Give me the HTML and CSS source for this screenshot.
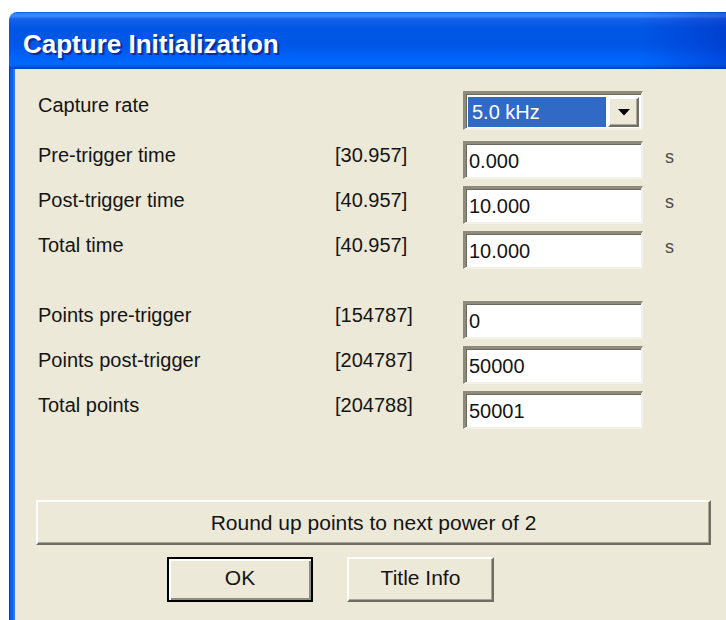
FILE: index.html
```html
<!DOCTYPE html>
<html lang="en">
<head>
<meta charset="utf-8">
<title>Capture Initialization</title>
<link rel="stylesheet" href="styles.css">
</head>
<body>
<div class="window">
  <div class="titlebar"><span class="title">Capture Initialization</span></div>
  <div class="panel">
    <div class="group">
      <div class="row row-combo">
        <span class="label">Capture rate</span>
        <span class="limit"></span>
        <div class="combo">
          <span class="combo-value">5.0 kHz</span>
          <span class="combo-btn"><svg width="12" height="7" viewBox="0 0 12 7"><polygon points="0,0 12,0 6,6.5" fill="#000"/></svg></span>
        </div>
      </div>
      <div class="row">
        <span class="label">Pre-trigger time</span>
        <span class="limit">[30.957]</span>
        <div class="field">0.000</div>
        <span class="unit">s</span>
      </div>
      <div class="row">
        <span class="label">Post-trigger time</span>
        <span class="limit">[40.957]</span>
        <div class="field">10.000</div>
        <span class="unit">s</span>
      </div>
      <div class="row">
        <span class="label">Total time</span>
        <span class="limit">[40.957]</span>
        <div class="field">10.000</div>
        <span class="unit">s</span>
      </div>
    </div>
    <div class="group">
      <div class="row">
        <span class="label">Points pre-trigger</span>
        <span class="limit">[154787]</span>
        <div class="field">0</div>
      </div>
      <div class="row">
        <span class="label">Points post-trigger</span>
        <span class="limit">[204787]</span>
        <div class="field">50000</div>
      </div>
      <div class="row">
        <span class="label">Total points</span>
        <span class="limit">[204788]</span>
        <div class="field">50001</div>
      </div>
    </div>
    <button class="btn btn-wide" type="button">Round up points to next power of 2</button>
    <div class="actions">
      <button class="btn btn-default" type="button">OK</button>
      <button class="btn btn-info" type="button">Title Info</button>
    </div>
  </div>
</div>
</body>
</html>
```
FILE: styles.css
```css
html, body {
  margin: 0;
  background: #fff;
  overflow: hidden;
}

body {
  font-family: "Liberation Sans", Arial, sans-serif;
}

/* Luna-style window frame */
.window {
  margin: 12px 0 0 9px;
  height: 608px;
  border-top-left-radius: 8px;
  overflow: hidden;
  display: flex;
  flex-direction: column;
}

.titlebar {
  flex: none;
  height: 57px;
  padding-left: 14px;
  background:
    linear-gradient(to right, rgba(0, 20, 160, 0) 88%, rgba(0, 25, 170, 0.35) 100%),
    linear-gradient(to bottom,
      #0048d6 0, #2a80fb 1px, #3d8cf9 4px, #1562ec 7px,
      #0056e4 16px, #0057e8 34px, #0062f8 44px, #0068ff 52px,
      #005ef2 54px, #0048d0 56px, #003fc0 57px);
}

.title {
  display: block;
  padding-top: 17px;
  font-weight: bold;
  font-size: 26px;
  line-height: 30px;
  color: #fff;
  text-shadow: 2px 2px 1px #0a2a9c;
}

.panel {
  flex: 1;
  padding: 22px 0 0 29px;
  background:
    linear-gradient(to right, #0a35d0 0 1px, #0d5ff0 1px 4px, #2b77f5 4px 6px, transparent 6px),
    #ece9d8;
}

/* form rows */
.group {
  display: flex;
  flex-direction: column;
  gap: 7px;
}

.group + .group {
  margin-top: 32px;
}

.row {
  display: grid;
  grid-template-columns: 297px 128px 180px auto;
  align-items: start;
  height: 38px;
  font-size: 20px;
  line-height: 24px;
  color: #141414;
}

.row-combo {
  height: 39px;
  margin-bottom: 4px;
}

.label,
.limit {
  padding-top: 2px;
  white-space: nowrap;
}

.unit {
  padding: 4px 0 0 22px;
  font-size: 18px;
  color: #4a4a4a;
}

/* sunken edit box */
.field {
  box-sizing: border-box;
  height: 38px;
  padding: 5px 3px 0;
  background: #fff;
  border-style: solid;
  border-width: 3px 2px 2px 3px;
  border-color: #8e8b7c #f4f2e8 #f4f2e8 #8e8b7c;
  box-shadow: inset 1px 1px 0 #6d6b5f;
}

/* drop-down list */
.combo {
  box-sizing: border-box;
  height: 39px;
  display: flex;
  gap: 2px;
  padding: 3px 2px 1px 2px;
  background: #fff;
  border-style: solid;
  border-width: 3px 2px 2px 3px;
  border-color: #8e8b7c #f4f2e8 #f4f2e8 #8e8b7c;
  box-shadow: inset 1px 1px 0 #6d6b5f;
}

.combo-value {
  flex: 1;
  padding: 1px 0 0 4px;
  line-height: 29px;
  background: #316ac5;
  color: #fff;
}

.combo-btn {
  box-sizing: border-box;
  width: 31px;
  display: flex;
  align-items: center;
  justify-content: center;
  background: #ece9d8;
  border: 2px solid;
  border-color: #fff #716f64 #716f64 #fff;
  box-shadow: inset -1px -1px 0 #aca899;
}

/* raised push buttons */
.btn {
  box-sizing: border-box;
  height: 45px;
  padding: 0;
  font-family: "Liberation Sans", Arial, sans-serif;
  font-size: 21px;
  line-height: 24px;
  color: #141414;
  background: #ece9d8;
  border: 2px solid;
  border-color: #fdfdfb #6f6d61 #6f6d61 #fdfdfb;
  box-shadow: inset -1px -1px 0 #a8a596;
}

.btn-wide {
  display: block;
  width: 675px;
  margin: 71px 0 0 -2px;
}

.actions {
  display: flex;
  gap: 34px;
  margin: 12px 0 0 129px;
}

.actions .btn {
  width: 146px;
  padding-bottom: 4px;
}

.actions .btn-info {
  width: 147px;
}

.btn-default {
  border-color: #000;
  box-shadow: inset 2px 2px 0 #fff, inset -2px -2px 0 #8f8c7e;
}
```
